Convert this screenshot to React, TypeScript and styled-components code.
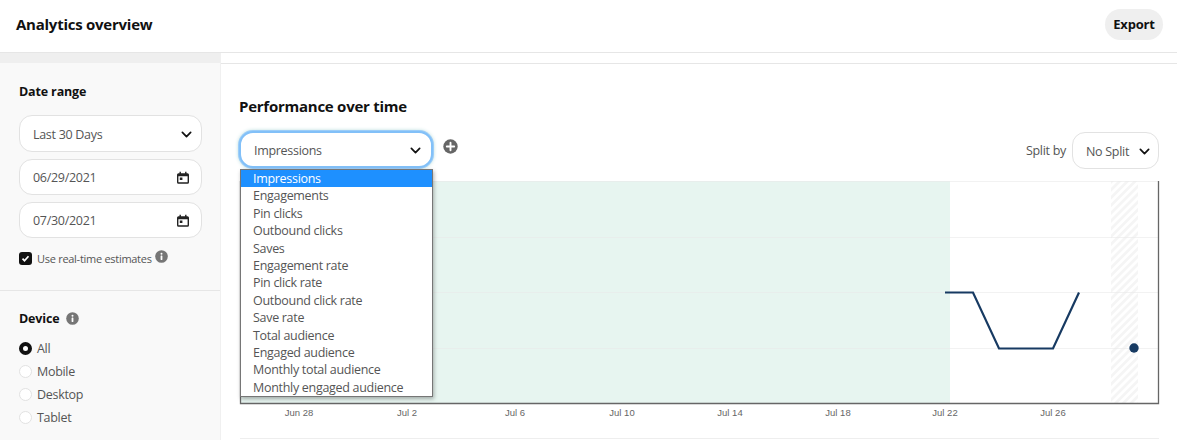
import React from "react";
import styled, { createGlobalStyle } from "styled-components";

const Global = createGlobalStyle`
  html, body { margin: 0; padding: 0; background: #fff; height: 440px; overflow: hidden; }
  body { font-family: "Open Sans", "Noto Sans", "Liberation Sans", sans-serif; color: #111; }
  * { box-sizing: border-box; }
`;

const Page = styled.div`
  width: 1177px;
  height: 440px;
  overflow: hidden;
  display: flex;
  flex-direction: column;
`;
const Header = styled.header`
  height: 53px;
  flex: none;
  display: flex;
  align-items: center;
  justify-content: space-between;
  padding: 0 14px 4px 16px;
  border-bottom: 1px solid #e6e6e6;
`;
const Title = styled.h1`
  margin: 0;
  font-size: 15px;
  font-weight: 700;
  letter-spacing: -0.25px;
  color: #111;
`;
const ExportButton = styled.button`
  width: 58px;
  height: 31px;
  border: 0;
  border-radius: 16px;
  background: #efefef;
  font: 700 13px "Open Sans", sans-serif;
  letter-spacing: -0.2px;
  color: #111;
  padding: 0;
`;
const Body = styled.div`
  flex: 1;
  display: flex;
  min-height: 0;
`;
const Sidebar = styled.aside`
  width: 221px;
  flex: none;
  background: #f9f9f9;
  border-right: 1px solid #f0f0f0;
  display: flex;
  flex-direction: column;
`;
const SideStrip = styled.div`
  height: 10px;
  background: #efefef;
  flex: none;
`;
const DateSection = styled.section`
  height: 228px;
  flex: none;
  padding: 20px 19px 0;
  border-bottom: 1px solid #e6e6e6;
`;
const DeviceSection = styled.section`
  padding: 19px 19px 0;
`;
const SectionTitle = styled.h2`
  margin: 0;
  font-size: 12.5px;
  line-height: 17px;
  font-weight: 700;
  color: #111;
  letter-spacing: -0.15px;
  display: flex;
  align-items: center;
  gap: 7px;
`;
const Field = styled.div<{ $top?: number; $date?: boolean }>`
  width: 183px;
  height: ${(p) => (p.$date ? 36.5 : 37)}px;
  margin-top: ${(p) => p.$top ?? 6.5}px;
  background: #fff;
  border: 1.5px solid #e2e2e2;
  border-radius: 13px;
  display: flex;
  align-items: center;
  justify-content: space-between;
  padding: 2px ${(p) => (p.$date ? 12 : 9)}px 0 13px;
  font-size: 12.5px;
  letter-spacing: -0.3px;
  color: #555;
`;
const CheckRow = styled.label`
  display: flex;
  align-items: center;
  margin-top: 13px;
  font-size: 11px;
  letter-spacing: -0.28px;
  color: #555;
  height: 14px;
`;
const CheckBox = styled.span`
  width: 13px;
  height: 13px;
  border-radius: 3px;
  background: #111;
  margin-right: 5px;
  display: flex;
  align-items: center;
  justify-content: center;
  flex: none;
`;
const InfoWrap = styled.span`
  display: inline-flex;
  margin-left: 3px;
  margin-top: -3px;
`;
const RadioList = styled.div`
  margin-top: 14px;
  display: flex;
  flex-direction: column;
  gap: 9px;
`;
const RadioRow = styled.div`
  display: flex;
  align-items: center;
  height: 14px;
  font-size: 12.5px;
  letter-spacing: -0.3px;
  color: #555;
`;
const RadioDot = styled.span<{ $on?: boolean }>`
  width: 13px;
  height: 13px;
  border-radius: 50%;
  margin-right: 5px;
  flex: none;
  background: #fff;
  border: ${(p) => (p.$on ? "4px solid #111" : "1.5px solid #e2e2e2")};
`;
const Main = styled.main`
  flex: 1;
  min-width: 0;
  display: flex;
  flex-direction: column;
`;
const TopRule = styled.div`
  height: 11px;
  flex: none;
  border-bottom: 1px solid #e6e6e6;
`;
const Content = styled.div`
  padding: 32px 18px 0 18px;
  position: relative;
`;
const H2 = styled.h2`
  margin: 0;
  font-size: 15px;
  line-height: 20px;
  font-weight: 700;
  letter-spacing: -0.25px;
  color: #111;
`;
const Controls = styled.div`
  margin-top: 15px;
  height: 50px;
  display: flex;
  align-items: flex-start;
`;
const MetricWrap = styled.div`
  position: relative;
  width: 194px;
`;
const MetricSelect = styled.div`
  width: 194px;
  height: 37px;
  background: #fff;
  border: 2px solid #82c0f8;
  box-shadow: 0 0 0 1px #9ccdf8, 0 0 4px #9cc;
  border-radius: 14px;
  display: flex;
  align-items: center;
  justify-content: space-between;
  padding: 2px 10px 0 13px;
  font-size: 12.5px;
  letter-spacing: -0.3px;
  color: #555;
`;
const Menu = styled.ul`
  position: absolute;
  z-index: 2;
  left: 1px;
  top: 38px;
  width: 193px;
  margin: 0;
  padding: 0;
  list-style: none;
  background: #fff;
  border: 1px solid #767676;
  box-shadow: 1px 2px 4px rgba(0, 0, 0, 0.3);
`;
const MenuItem = styled.li<{ $active?: boolean }>`
  height: 17.4px;
  line-height: 17.4px;
  padding-left: 12px;
  font-size: 12.5px;
  letter-spacing: -0.3px;
  white-space: nowrap;
  color: ${(p) => (p.$active ? "#fff" : "#555")};
  background: ${(p) => (p.$active ? "#1e90ff" : "transparent")};
`;
const AddIcon = styled.span`
  display: flex;
  margin: 8px 0 0 10px;
`;
const Spacer = styled.div`
  flex: 1;
`;
const SplitLabel = styled.span`
  font-size: 12.5px;
  letter-spacing: -0.3px;
  color: #555;
  margin: 11px 6px 0 0;
`;
const SplitSelect = styled.div`
  width: 87px;
  height: 37px;
  margin-top: 1px;
  background: #fff;
  border: 1.5px solid #e2e2e2;
  border-radius: 13px;
  display: flex;
  align-items: center;
  justify-content: space-between;
  padding: 2px 8px 0 13px;
  font-size: 12.5px;
  letter-spacing: -0.3px;
  color: #555;
`;
const Chart = styled.svg`
  display: block;
  width: 937px;
  height: 239px;
`;
const BottomRule = styled.div`
  width: 919px;
  margin: 18px 0 0 1px;
  border-top: 1px solid #eee;
`;

const Chevron = ({ size = 11 }: { size?: number }) => (
  <svg width={size} height={size} viewBox="0 0 12 12" fill="none">
    <path d="M1.500 3.800 6 8.200l4.500-4.400" stroke="#111" strokeWidth="1.900" strokeLinecap="round" strokeLinejoin="round" />
  </svg>
);
const Calendar = () => (
  <svg width="12" height="13" viewBox="0 0 12 13" fill="none">
    <path d="M2.500.8h1.400v1.500h4.200V.8h1.400v1.500h1A1.500 1.500 0 0 1 12 3.800v7.400a1.500 1.500 0 0 1-1.500 1.500h-9A1.500 1.500 0 0 1 0 11.200V3.800a1.500 1.500 0 0 1 1.500-1.500h1zM1.400 5.200v6.100h9.200V5.200zM2.800 6.500h2.600v2.400H2.800z" fill="#222" fillRule="evenodd" />
  </svg>
);
const Info = () => (
  <svg width="13" height="13" viewBox="0 0 13 13">
    <circle cx="6.500" cy="6.500" r="6.300" fill="#767676" />
    <rect x="5.600" y="5.500" width="1.800" height="4.500" rx=".4" fill="#fff" />
    <circle cx="6.500" cy="3.700" r="1" fill="#fff" />
  </svg>
);
const Plus = () => (
  <svg width="15" height="15" viewBox="0 0 15 15">
    <circle cx="7.500" cy="7.500" r="7.200" fill="#666" />
    <path d="M7.500 3.800v7.400M3.800 7.500h7.400" stroke="#fff" strokeWidth="1.900" strokeLinecap="round" />
  </svg>
);

const metrics = [
  "Impressions", "Engagements", "Pin clicks", "Outbound clicks", "Saves", "Engagement rate",
  "Pin click rate", "Outbound click rate", "Save rate", "Total audience", "Engaged audience",
  "Monthly total audience", "Monthly engaged audience",
];
const ticks: [string, number][] = [
  ["Jun 28", 60], ["Jul 2", 168], ["Jul 6", 276], ["Jul 10", 383],
  ["Jul 14", 491], ["Jul 18", 599], ["Jul 22", 706], ["Jul 26", 814],
];

export default function App() {
  return (
    <Page>
      <Global />
      <Header>
        <Title>Analytics overview</Title>
        <ExportButton>Export</ExportButton>
      </Header>
      <Body>
        <Sidebar>
          <SideStrip />
          <DateSection>
            <SectionTitle>Date range</SectionTitle>
            <Field $top={15}>Last 30 Days <Chevron /></Field>
            <Field $date>06/29/2021 <Calendar /></Field>
            <Field $date>07/30/2021 <Calendar /></Field>
            <CheckRow>
              <CheckBox>
                <svg width="9" height="9" viewBox="0 0 9 9" fill="none">
                  <path d="M1.500 4.700 3.500 6.700 7.500 2.300" stroke="#fff" strokeWidth="1.700" />
                </svg>
              </CheckBox>
              Use real-time estimates
              <InfoWrap><Info /></InfoWrap>
            </CheckRow>
          </DateSection>
          <DeviceSection>
            <SectionTitle>Device <Info /></SectionTitle>
            <RadioList>
              <RadioRow><RadioDot $on />All</RadioRow>
              <RadioRow><RadioDot />Mobile</RadioRow>
              <RadioRow><RadioDot />Desktop</RadioRow>
              <RadioRow><RadioDot />Tablet</RadioRow>
            </RadioList>
          </DeviceSection>
        </Sidebar>
        <Main>
          <TopRule />
          <Content>
            <H2>Performance over time</H2>
            <Controls>
              <MetricWrap>
                <MetricSelect>Impressions <Chevron /></MetricSelect>
                <Menu>
                  {metrics.map((m, i) => (
                    <MenuItem key={m} $active={i === 0}>{m}</MenuItem>
                  ))}
                </Menu>
              </MetricWrap>
              <AddIcon><Plus /></AddIcon>
              <Spacer />
              <SplitLabel>Split by</SplitLabel>
              <SplitSelect>No Split <Chevron /></SplitSelect>
            </Controls>
            <Chart viewBox="0 0 937 239">
              <defs>
                <pattern id="hatch" width="5.500" height="5.500" patternUnits="userSpaceOnUse" patternTransform="rotate(45)">
                  <rect width="5.500" height="5.500" fill="#fff" />
                  <rect width="2.700" height="5.500" fill="#f5f5f5" />
                </pattern>
              </defs>
              <rect x="1" y="0" width="710" height="222" fill="#e7f5f0" />
              <rect x="872" y="0" width="27" height="222" fill="url(#hatch)" />
              <path d="M1 .5H919M1 56.500H919M1 111.500H919M1 167.500H919" stroke="#e9e9e9" strokeOpacity=".6" fill="none" />
              <path d="M1.500 0V222.500H919.500V0" stroke="#666" strokeWidth="1.300" fill="none" />
              <path d="M706 111.500H734L760 167.500H814L840 111.500" stroke="#173a62" strokeWidth="2.200" fill="none" />
              <circle cx="895" cy="167" r="4.700" fill="#173a62" />
              {ticks.map(([t, x]) => (
                <text key={t} x={x} y="235" textAnchor="middle" fontSize="9.500" fontFamily="Liberation Sans, sans-serif" fill="#666">{t}</text>
              ))}
            </Chart>
            <BottomRule />
          </Content>
        </Main>
      </Body>
    </Page>
  );
}
